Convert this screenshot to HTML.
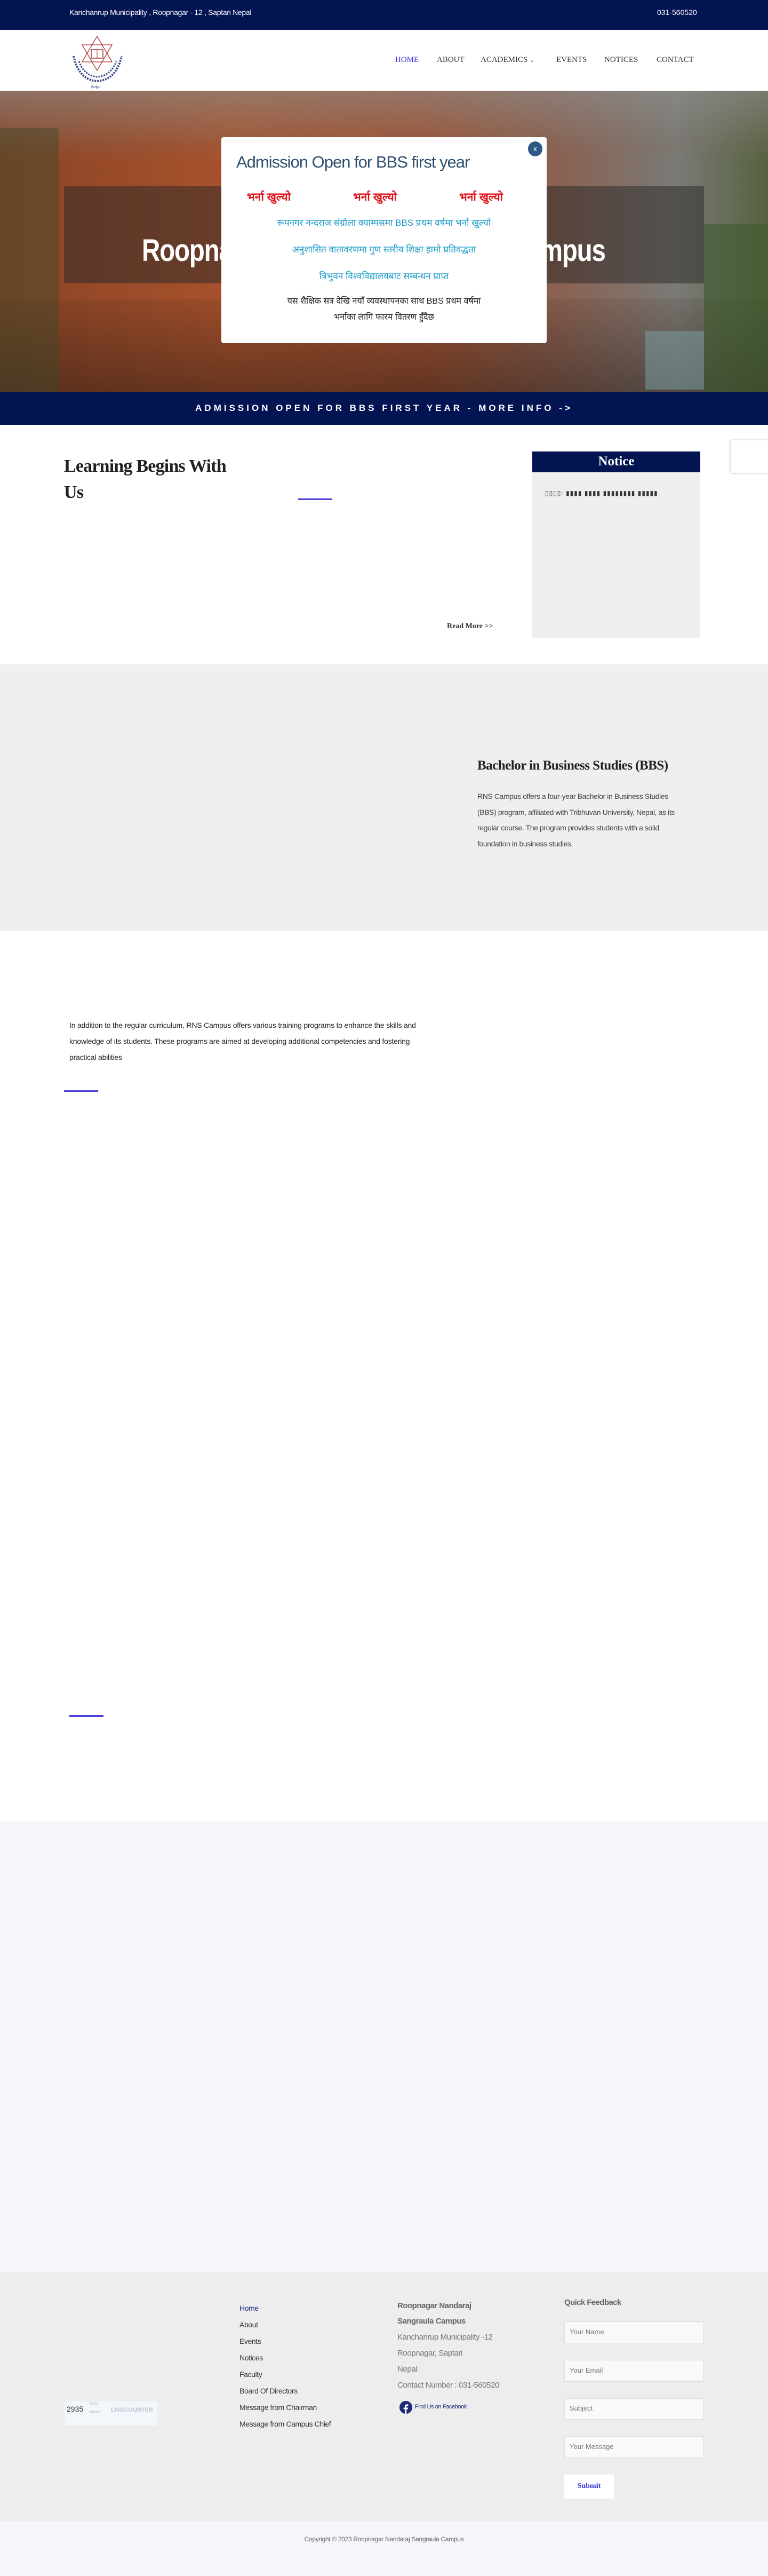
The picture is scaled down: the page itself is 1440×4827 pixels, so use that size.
<!DOCTYPE html>
<html><head><meta charset="utf-8">
<style>
*{margin:0;padding:0;box-sizing:border-box}
body{width:1440px;height:4827px;position:relative;font-family:"Liberation Sans","Noto Sans CJK SC",sans-serif;background:#fff;overflow:hidden}
.a{position:absolute}
.serif{font-family:"Liberation Serif",serif}
.dev{font-family:"Liberation Sans","Noto Sans CJK SC","WenQuanYi Zen Hei",sans-serif}
</style></head><body>
<!-- top bar -->
<div class="a" style="left:0;top:0;width:1440px;height:56px;background:#031452"></div>
<div class="a" style="left:130px;top:15px;color:#fff;font-size:14px;letter-spacing:-0.3px">Kanchanrup Municipality , Roopnagar - 12 , Saptari Nepal</div>
<div class="a" style="left:1232px;top:15px;color:#fff;font-size:14px">031-560520</div>
<!-- header -->
<svg class="a" style="left:118px;top:60px" width="130" height="110" viewBox="0 0 130 110">
<polygon points="64,8 92,56 36,56" fill="none" stroke="#a33" stroke-width="1.3"/>
<polygon points="64,72 92,24 36,24" fill="none" stroke="#a33" stroke-width="1.3"/>
<rect x="53" y="33" width="22" height="16" fill="none" stroke="#933" stroke-width="1.5"/>
<line x1="64" y1="33" x2="64" y2="49" stroke="#933"/>
<path d="M20 45 Q30 90 64 92 Q100 90 110 45" fill="none" stroke="#3a4a8a" stroke-width="4" stroke-dasharray="3 2"/>
<path d="M30 55 Q40 82 64 84 Q90 82 100 55" fill="none" stroke="#3a4a8a" stroke-width="3" stroke-dasharray="3 2"/>
<text x="52" y="106" font-size="9" fill="#3a4a8a">२०७०</text>
</svg>
<div class="a serif" style="top:104px;left:741px;font-size:15px;color:#3b35d8">HOME</div>
<div class="a serif" style="top:104px;left:819px;font-size:15px;color:#333">ABOUT</div>
<div class="a serif" style="top:104px;left:901px;font-size:15px;color:#333">ACADEMICS <span style="font-size:11px">&#8964;</span></div>
<div class="a serif" style="top:104px;left:1043px;font-size:15px;color:#333">EVENTS</div>
<div class="a serif" style="top:104px;left:1133px;font-size:15px;color:#333">NOTICES</div>
<div class="a serif" style="top:104px;left:1231px;font-size:15px;color:#333">CONTACT</div>
<!-- hero -->
<div class="a" style="left:0;top:170px;width:1440px;height:565px;background:linear-gradient(90deg,#8a4426 0%,#a8522c 30%,#9e5030 55%,#8a6050 72%,#7a7a76 88%,#566240 100%)"></div>
<div class="a" style="left:0;top:170px;width:1440px;height:130px;background:linear-gradient(180deg,#8e8e8c,rgba(130,110,100,.3) 80%,rgba(0,0,0,0));opacity:.6"></div>
<div class="a" style="left:0;top:560px;width:1440px;height:175px;background:linear-gradient(180deg,rgba(60,30,20,.1),rgba(40,25,20,.5))"></div>
<div class="a" style="left:0;top:240px;width:110px;height:495px;background:#3c4a2a;opacity:.45"></div>
<div class="a" style="left:1320px;top:420px;width:120px;height:315px;background:#3e5a2e;opacity:.6"></div>
<div class="a" style="left:1210px;top:620px;width:110px;height:110px;background:#7a9aa0;opacity:.55"></div>
<div class="a" style="left:120px;top:349px;width:1200px;height:182px;background:rgba(40,40,40,.5)"></div>
<div class="a" style="left:266px;top:436px;width:910px;color:#fff;font-size:58px;font-weight:bold;letter-spacing:-1.5px;white-space:nowrap;transform:scaleX(.82);transform-origin:left">Roopnagar Nandaraj Sangraula Campus</div>
<!-- popup -->
<div class="a" style="left:415px;top:257px;width:610px;height:386px;background:#fff;border-radius:4px"></div>
<div class="a" style="left:990px;top:265px;width:27px;height:28px;border-radius:50%;background:#2d5a85;color:#fff;font-size:13px;text-align:center;line-height:28px">x</div>
<div class="a" style="left:443px;top:286px;font-size:31px;color:#2e4e70;letter-spacing:-1px">Admission Open for BBS first year</div>
<div class="a dev" style="left:463px;top:355px;font-size:21px;color:#e0141b;font-weight:bold">भर्ना खुल्यो</div>
<div class="a dev" style="left:662px;top:355px;font-size:21px;color:#e0141b;font-weight:bold">भर्ना खुल्यो</div>
<div class="a dev" style="left:861px;top:355px;font-size:21px;color:#e0141b;font-weight:bold">भर्ना खुल्यो</div>
<div class="a dev" style="left:415px;width:610px;text-align:center;top:405px;font-size:17px;color:#1a9ac8">रूपनगर नन्दराज संग्रौला क्याम्पसमा BBS प्रथम वर्षमा भर्ना खुल्यो</div>
<div class="a dev" style="left:415px;width:610px;text-align:center;top:455px;font-size:17px;color:#1a9ac8">अनुशासित वातावरणमा गुण स्तरीय शिक्षा हामो प्रतिवद्धता</div>
<div class="a dev" style="left:415px;width:610px;text-align:center;top:505px;font-size:17px;color:#1a9ac8">त्रिभुवन विश्वविद्यालयबाट सम्बन्धन प्राप्त</div>
<div class="a dev" style="left:415px;width:610px;text-align:center;top:550px;font-size:16px;color:#222;line-height:30px">यस शैक्षिक सत्र देखि नयाँ व्यवस्थापनका साथ BBS प्रथम वर्षमा<br>भर्नाका लागि फारम वितरण हुँदैछ</div>
<!-- banner -->
<div class="a" style="left:0;top:735px;width:1440px;height:61px;background:#031452"></div>
<div class="a" style="left:0;width:1440px;top:755px;text-align:center;color:#fff;font-size:17px;font-weight:bold;letter-spacing:5px">ADMISSION OPEN FOR BBS FIRST YEAR - MORE INFO -&gt;</div>
<!-- learning -->
<div class="a serif" style="left:120px;top:849px;font-size:34px;font-weight:bold;color:#222;line-height:49px;letter-spacing:-0.8px">Learning Begins With<br>Us</div>
<div class="a" style="left:559px;top:934px;width:63px;height:3px;background:#4a3fd6"></div>
<div class="a serif" style="left:838px;top:1166px;font-size:14px;font-weight:bold;color:#333">Read More &gt;&gt;</div>
<div class="a" style="left:998px;top:846px;width:315px;height:349px;background:#eee"></div>
<div class="a" style="left:998px;top:846px;width:315px;height:39px;background:#031452"></div>
<div class="a serif" style="left:998px;width:315px;text-align:center;top:851px;font-size:25px;font-weight:bold;color:#fff">Notice</div>
<div class="a" style="left:1022px;top:917px;font-size:12px;color:#333;letter-spacing:1px">▯▯▯▯: ▮▮▮▮ ▮▮▮▮ ▮▮▮▮▮▮▮▮ ▮▮▮▮▮</div>
<div class="a" style="left:1370px;top:825px;width:74px;height:61px;background:#fff;box-shadow:0 0 4px rgba(0,0,0,.3);border-radius:2px"></div>
<!-- BBS -->
<div class="a" style="left:0;top:1245px;width:1440px;height:500px;background:#efefef"></div>
<div class="a serif" style="left:895px;top:1421px;font-size:25px;font-weight:bold;color:#222;letter-spacing:-0.5px">Bachelor in Business Studies (BBS)</div>
<div class="a" style="left:895px;top:1478px;width:395px;font-size:14px;color:#444;line-height:29.5px;letter-spacing:-0.4px">RNS Campus offers a four-year Bachelor in Business Studies (BBS) program, affiliated with Tribhuvan University, Nepal, as its regular course. The program provides students with a solid foundation in business studies.</div>
<!-- training -->
<div class="a" style="left:130px;top:1906px;width:670px;font-size:14px;color:#222;line-height:30px;letter-spacing:-0.2px">In addition to the regular curriculum, RNS Campus offers various training programs to enhance the skills and knowledge of its students. These programs are aimed at developing additional competencies and fostering practical abilities</div>
<div class="a" style="left:120px;top:2043px;width:64px;height:3px;background:#4a3fd6"></div>
<div class="a" style="left:130px;top:3214px;width:64px;height:3px;background:#4a3fd6"></div>
<div class="a" style="left:0;top:3413px;width:1440px;height:844px;background:#f5f6fa"></div>
<!-- footer -->
<div class="a" style="left:0;top:4257px;width:1440px;height:468px;background:#ededed"></div>
<div class="a" style="left:0;top:4725px;width:1440px;height:102px;background:#f5f6fa"></div>
<div class="a" style="left:121px;top:4500px;width:174px;height:45px;background:#f3f6fa;border-radius:3px"></div>
<div class="a" style="left:125px;top:4506px;font-size:14px;color:#333">2935</div>
<div class="a" style="left:167px;top:4502px;font-size:6px;color:#aab">TOTAL</div>
<div class="a" style="left:167px;top:4518px;font-size:6px;color:#aab">VISITOR</div>
<div class="a" style="left:208px;top:4510px;font-size:11px;color:#bcc5d2;font-weight:bold">LIVECOUNTER</div>
<div class="a" style="left:449px;top:4310px;font-size:14px;line-height:31px;color:#333;letter-spacing:-0.4px">
<div style="color:#1e2a7a">Home</div><div>About</div><div>Events</div><div>Notices</div><div>Faculty</div><div>Board Of Directors</div><div>Message from Chairman</div><div>Message from Campus Chief</div></div>
<div class="a" style="left:745px;top:4306px;width:200px;font-size:15px;font-weight:bold;color:#666;line-height:29px;letter-spacing:-0.5px">Roopnagar Nandaraj Sangraula Campus</div>
<div class="a" style="left:745px;top:4365px;font-size:15px;color:#777;line-height:30px;letter-spacing:-0.4px">Kanchanrup Municipality -12<br>Roopnagar, Saptari<br>Nepal<br>Contact Number : 031-560520</div>
<svg class="a" style="left:749px;top:4499px" width="24" height="24" viewBox="0 0 24 24"><circle cx="12" cy="12" r="12" fill="#1e2a7a"/><path d="M13.2 24v-8.5h2.6l.4-3h-3v-1.9c0-.9.3-1.5 1.5-1.5h1.6V6.4c-.3 0-1.2-.1-2.3-.1-2.3 0-3.8 1.4-3.8 3.9v2.3H7.6v3h2.6V24z" fill="#fff"/></svg>
<div class="a" style="left:778px;top:4504px;font-size:11px;color:#1e2a7a;letter-spacing:-0.4px">Find Us on Facebook</div>
<div class="a" style="left:1058px;top:4306px;font-size:15px;font-weight:bold;color:#666;letter-spacing:-0.6px">Quick Feedback</div>
<div class="a" style="left:1058px;top:4350px;width:262px;height:41px;background:#f9f9f9;border:1px solid #ddd"></div>
<div class="a" style="left:1068px;top:4362px;font-size:13px;color:#777">Your Name</div>
<div class="a" style="left:1058px;top:4422px;width:262px;height:41px;background:#f9f9f9;border:1px solid #ddd"></div>
<div class="a" style="left:1068px;top:4434px;font-size:13px;color:#777">Your Email</div>
<div class="a" style="left:1058px;top:4494px;width:262px;height:40px;background:#f9f9f9;border:1px solid #ddd"></div>
<div class="a" style="left:1068px;top:4505px;font-size:13px;color:#777">Subject</div>
<div class="a" style="left:1058px;top:4565px;width:262px;height:41px;background:#f9f9f9;border:1px solid #ddd"></div>
<div class="a" style="left:1068px;top:4577px;font-size:13px;color:#777">Your Message</div>
<div class="a" style="left:1058px;top:4637px;width:93px;height:45px;background:#fff;border-radius:2px"></div>
<div class="a serif" style="left:1058px;width:93px;text-align:center;top:4651px;font-size:14px;color:#3b35d8;font-weight:bold">Submit</div>
<div class="a" style="left:0;width:1440px;text-align:center;top:4751px;font-size:12px;color:#666;letter-spacing:-0.3px">Copyright © 2023 Roopnagar Nandaraj Sangraula Campus</div>
</body></html>
